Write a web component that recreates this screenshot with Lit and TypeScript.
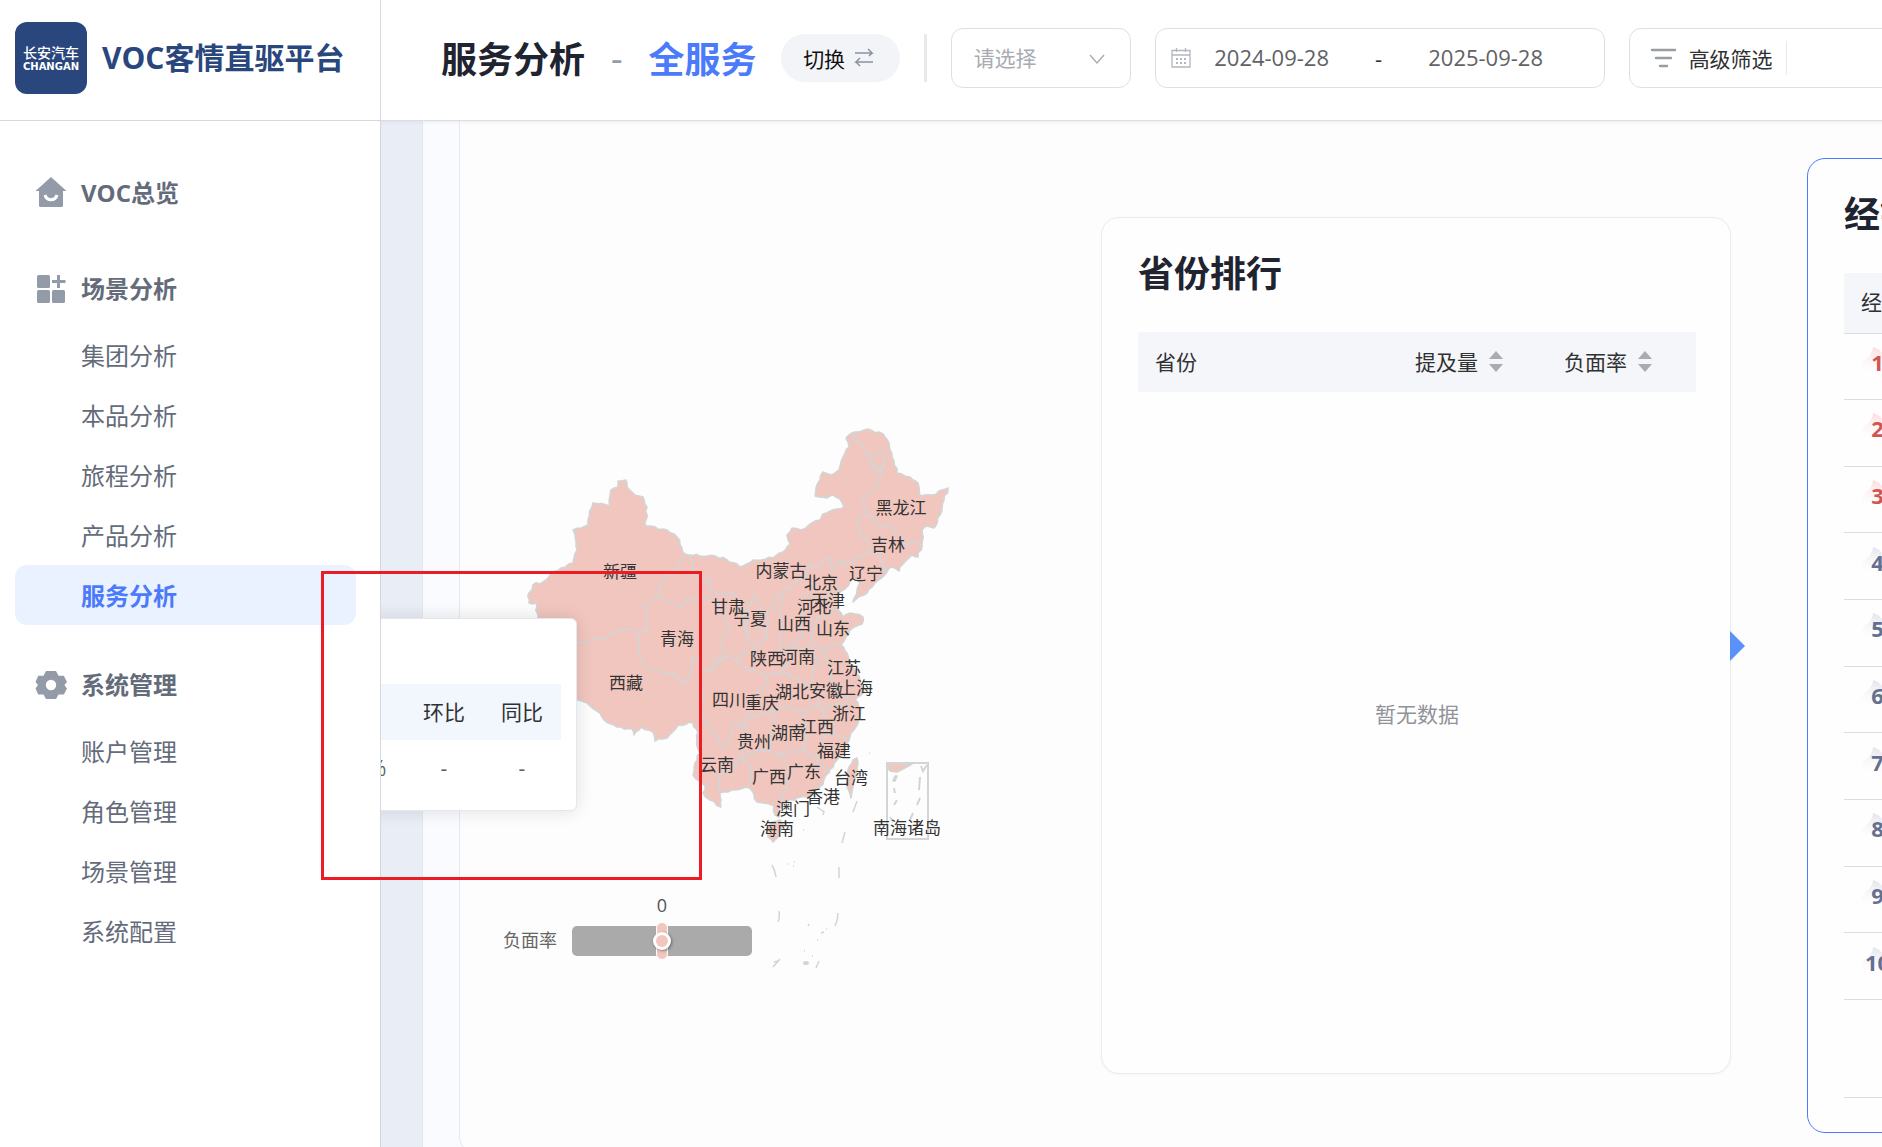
import { LitElement, html, svg, css } from "lit";
import { customElement } from "lit/decorators.js";
import { classMap } from "lit/directives/class-map.js";

type Point = [number, number];

/** Parses "x,y x,y ..." into points. */
const parse = (s: string): Point[] =>
  s.trim().split(/\s+/).map((p) => p.split(",").map(Number) as Point);

/** Breaks long segments into short irregular ones so borders read as natural coastlines. */
function rough(source: string, amplitude = 1, closed = false): string {
  const pts = parse(source);
  if (closed) pts.push(pts[0]);
  let seed = 7;
  const noise = () => {
    seed = (seed * 1103515245 + 12345) % 2147483648;
    return seed / 2147483648 - 0.5;
  };
  const out: string[] = [`M${pts[0][0]} ${pts[0][1]}`];
  for (let i = 1; i < pts.length; i++) {
    const [x0, y0] = pts[i - 1];
    const [x1, y1] = pts[i];
    const length = Math.hypot(x1 - x0, y1 - y0);
    const steps = Math.max(1, Math.round(length / 4));
    for (let k = 1; k < steps; k++) {
      const t = k / steps;
      const shift = noise() * 2 * amplitude;
      const x = x0 + (x1 - x0) * t - ((y1 - y0) / length) * shift;
      const y = y0 + (y1 - y0) * t + ((x1 - x0) / length) * shift;
      out.push(`L${x.toFixed(1)} ${y.toFixed(1)}`);
    }
    out.push(`L${x1} ${y1}`);
  }
  return out.join("") + (closed ? "Z" : "");
}

const MAINLAND =
  "618,481 626,480 627,487 633,493 643,497 647,507 646,520 646,526 663,529 677,537 682,548 685,554 700,556 715,556 727,560 740,567 753,560 773,558 783,552 790,544 787,535 792,528 801,530 812,523 820,520 823,514 837,509 844,507 840,499 833,495 827,498 815,496 816,488 820,480 823,472 832,475 839,470 843,457 849,447 846,438 855,432 868,429 883,434 889,443 892,457 897,473 910,477 918,483 920,496 933,495 942,490 948,488 944,500 940,515 934,528 927,526 922,530 922,545 918,557 912,555 903,564 899,571 892,567 887,572 875,583 867,593 853,602 857,590 860,582 853,579 847,587 840,592 837,602 838,610 843,617 850,613 863,617 862,624 850,630 841,645 847,653 853,667 860,680 864,692 855,700 861,708 858,723 850,737 845,750 837,760 828,773 820,787 808,797 797,798 783,803 778,810 779,817 775,815 774,806 757,802 753,792 747,787 732,790 720,793 721,807 710,800 703,793 705,785 693,775 695,763 700,753 697,740 698,732 693,723 678,725 667,738 655,741 653,732 641,727 634,735 632,729 617,727 608,723 600,713 587,703 578,700 565,692 556,675 548,650 538,617 536,603 529,603 529,593 533,585 543,582 550,575 573,563 577,550 573,530 588,525 588,520 593,503 610,506 611,490 618,487";

const BORDERS = [
  "560,644 577,642 590,640 603,638 617,632 630,629 638,632 647,632 648,622 643,605 658,597 660,585 667,577 678,568 683,555",
  "657,597 670,602 682,607 688,597 698,600 707,597 720,607 728,627 723,643 723,657 710,672 700,668",
  "690,554 694,570 703,583 710,578 709,588 718,595 733,593 736,604 744,612 747,637",
  "638,633 639,653 645,665 660,672 677,675 683,685 690,677 692,658 698,657 700,670 702,700 703,717 710,727 722,748 728,743 733,723 747,727 743,717",
  "710,672 716,658 723,660 728,655 737,660 743,667 757,672 768,675 780,673 797,678 812,687 813,670 820,663 808,647 790,650",
  "755,595 748,607 747,637 755,647 767,638 758,628 761,612 755,595",
  "767,638 767,613 778,595 793,585 806,577 808,563 818,567 828,557 833,570 840,560 843,567 857,557 870,552 867,537 862,537 857,520 867,515 862,500 875,488 882,473 873,463 865,453 862,443 853,440 857,433",
  "870,455 883,452 886,462 880,473 872,468 870,455",
  "867,515 873,517 875,523 893,527 900,538 908,545 914,542 922,547",
  "870,552 880,553 882,563 887,572",
  "785,593 780,607 782,627 779,650 790,658 780,673",
  "805,593 803,610 802,637 783,650",
  "810,643 817,617 830,613 838,610",
  "806,577 814,588 811,597 822,600 830,592 842,590",
  "823,650 830,667 833,683 840,697 852,700",
  "810,643 823,650 832,644 841,645",
  "768,675 763,690 752,700 747,717 760,715 773,710 783,708 803,710 820,705 812,687",
  "740,722 744,738 742,757 760,750 770,750 773,733 772,710",
  "720,793 718,775 730,770 742,757 752,770 748,787",
  "760,750 780,753 790,767 787,787 778,803",
  "780,753 803,750 805,733 803,710",
  "803,750 817,760 823,767 830,773",
  "820,705 823,710 827,733 820,750 817,760",
  "827,733 838,736 849,737",
  "823,710 838,703 852,704",
  "737,660 745,650 752,655 755,647",
];

const HAINAN = "780,820 783,825 778,837 773,842 768,837 767,828 772,822";
const TAIWAN = "857,758 858,763 856,776 853,787 851,798 847,787 848,770 853,760";

const ISLETS =
  "M857 801L853 812M845 832L842 843M839 867V878M838 913Q838 920 835 926M819 961L816 968M779 911Q780 918 778 922M772 865Q775 870 776 877M780 959L773 967M774 962L778 961M817 807L824 812L823 815M803 830h1M788 864h1M793 866h1M794 862h1M808 926l1 -2M821 933l3 -1M826 929h1M817 940h1M804 951h1M812 956h1M869 753h1";

const INSET =
  "M921 766L923 771L927 765M894 788L895 793M897 800L894 805M920 777L919 790M920 798L917 805M913 813L910 820M890 817L893 822";

const LABELS: [string, number, number][] = [
  ["新疆", 620, 572], ["西藏", 626, 683], ["青海", 677, 639], ["甘肃", 728, 607],
  ["宁夏", 750, 619], ["黑龙江", 901, 508], ["吉林", 888, 545], ["辽宁", 866, 574],
  ["内蒙古", 781, 571], ["北京", 821, 583], ["天津", 828, 601], ["河北", 814, 607],
  ["山西", 794, 624], ["山东", 833, 629], ["陕西", 767, 659], ["河南", 798, 657],
  ["江苏", 844, 668], ["上海", 856, 688], ["安徽", 826, 691], ["湖北", 792, 692],
  ["重庆", 762, 703], ["四川", 729, 700], ["浙江", 849, 714], ["江西", 817, 727],
  ["湖南", 788, 733], ["贵州", 754, 742], ["福建", 834, 751], ["云南", 717, 765],
  ["广西", 769, 777], ["广东", 804, 772], ["台湾", 851, 778], ["香港", 823, 797],
  ["澳门", 793, 809], ["海南", 777, 829], ["南海诸岛", 907, 828],
];

const FONT = css`
  * { box-sizing: border-box; }
  button, input, select { font: inherit; color: inherit; }
  h1, h2, p { margin: 0; }
`;

@customElement("side-nav")
class SideNav extends LitElement {
  static styles = [FONT, css`
    :host { display: block; background: #fff; border-right: 1px solid #d6d7da; padding: 36px 24px 0 15px; }
    .group { margin: 0 0 24px; }
    .head { display: flex; align-items: center; height: 72px; padding-left: 18px; gap: 12px; font-weight: 700; color: #646b7a; text-decoration: none; }
    .text { padding-bottom: 3px; }
    .icon { width: 36px; height: 36px; flex: none; fill: #949ba8; }
    .list { list-style: none; margin: 0; padding: 0; }
    .link { display: flex; align-items: center; height: 60px; padding: 0 0 2px 66px; border-radius: 12px; color: #646b7a; text-decoration: none; }
    .active { background: #ebf2ff; color: #4b7bfa; font-weight: 700; }
  `];

  private icon(name: string) {
    const shapes: Record<string, unknown> = {
      home: svg`<path d="M18 2L2.500 16H6v14.500a1.500 1.500 0 0 0 1.500 1.500h21a1.500 1.500 0 0 0 1.500-1.500V16h3.500z"/><path d="M12 20a6.200 6.200 0 0 0 12 0" fill="none" stroke="#fff" stroke-width="3"/>`,
      grid: svg`<rect x="4" y="4" width="13" height="13" rx="1.500"/><rect x="4" y="19" width="13" height="13" rx="1.500"/><rect x="19" y="19" width="13" height="13" rx="1.500"/><path d="M24 4h3v5h5.500v3H27v5h-3v-5h-5V9h5z"/>`,
      gear: svg`<path fill-rule="evenodd" d="M13 4h10l2.500 4.700h5.300L34 15l-2.600 3L34 21.500l-3.200 6h-5.300L23 32H13l-2.500-4.500H5.200L2.500 21.500 5 18 2.500 15l2.700-6.300h5.300zM18 12.800a5.200 5.200 0 1 0 0 10.400 5.200 5.200 0 0 0 0-10.400z"/>`,
    };
    return html`<svg class="icon" viewBox="0 0 36 36" aria-hidden="true">${shapes[name]}</svg>`;
  }

  private groups = [
    { icon: "home", title: "VOC总览", items: [] as string[] },
    { icon: "grid", title: "场景分析", items: ["集团分析", "本品分析", "旅程分析", "产品分析", "服务分析"] },
    { icon: "gear", title: "系统管理", items: ["账户管理", "角色管理", "场景管理", "系统配置"] },
  ];

  render() {
    return html`<nav>
      ${this.groups.map((g) => html`<div class="group">
        <a class="head" href="#">${this.icon(g.icon)}<span class="text">${g.title}</span></a>
        ${g.items.length ? html`<ul class="list">
          ${g.items.map((t) => html`<li><a href="#" class=${classMap({ link: true, active: t === "服务分析" })}>${t}</a></li>`)}
        </ul>` : ""}
      </div>`)}
    </nav>`;
  }
}

@customElement("top-bar")
class TopBar extends LitElement {
  static styles = [FONT, css`
    :host { display: flex; align-items: center; background: #fff; border-bottom: 1px solid #dcdde2; padding: 0 0 4px 60px; overflow: hidden; font-size: 21px; white-space: nowrap; }
    .title { font-size: 36px; line-height: 48px; padding-top: 4px; font-weight: 700; color: #1f2430; flex: none; }
    .dash { font-size: 36px; line-height: 48px; color: #949ba8; margin: 0 26px; padding-top: 2px; }
    .scope { font-size: 36px; line-height: 48px; padding-top: 4px; font-weight: 700; color: #4b7bfa; flex: none; }
    .switch { display: flex; align-items: center; justify-content: center; gap: 8px; flex: none; width: 119px; height: 48px; margin-left: 24px; padding: 0 2px 0 0; border: 0; border-radius: 24px; background: #f2f4f8; color: #111; }
    .rule { flex: none; width: 3px; height: 48px; background: #e8e9ed; margin: 0 24px; }
    .box { position: relative; display: flex; align-items: center; flex: none; height: 60px; border: 1px solid #dcdfe6; border-radius: 12px; background: #fff; }
    .pick { width: 180px; }
    .select { appearance: none; width: 100%; height: 100%; border: 0; background: none; padding: 0 22px; color: #a8abb2; outline: none; }
    .chevron { position: absolute; right: 24px; top: 21px; pointer-events: none; }
    .range { width: 450px; margin-left: 24px; padding-left: 14px; font-size: 22px; color: #606266; }
    .date { width: 160px; height: 48px; border: 0; background: none; padding: 0 0 2px; text-align: center; outline: none; }
    .to { width: 54px; text-align: center; color: #303133; }
    .more { width: 400px; margin-left: 24px; padding-left: 20px; color: #303133; gap: 12px; }
    .advanced { display: flex; align-items: center; gap: 12px; height: 34px; border: 0; border-right: 1px solid #e8e9ed; background: none; padding: 0 13px 0 0; }
  `];

  render() {
    return html`
      <h1 class="title">服务分析</h1><span class="dash">-</span><span class="scope">全服务</span>
      <button class="switch" type="button">切换
        <svg width="22" height="22" viewBox="0 0 22 22" fill="none" stroke="#8a92a0" stroke-width="1.500" aria-hidden="true"><path d="M2 6h17l-4-4M19 6l-3 3M20 15H3l4-4M3 15l4 4"/></svg>
      </button>
      <span class="rule"></span>
      <div class="box pick">
        <select class="select" aria-label="请选择"><option>请选择</option></select>
        <svg class="chevron" width="18" height="18" viewBox="0 0 18 18" fill="none" stroke="#a8abb2" stroke-width="1.400" aria-hidden="true"><path d="M2 5l7 8 7-8"/></svg>
      </div>
      <div class="box range">
        <svg width="22" height="22" viewBox="0 0 22 22" fill="none" stroke="#b4b7bf" stroke-width="1.300" aria-hidden="true"><path d="M2 3.500h18v16.500H2zM2 8h18M6.500 1v4M15.500 1v4"/><path d="M6 12h2M10 12h2M14 12h2M6 16h2M10 16h2M14 16h2" stroke-width="1.800"/></svg>
        <input class="date" type="text" aria-label="开始日期" .value=${"2024-09-28"} />
        <span class="to">-</span>
        <input class="date" type="text" aria-label="结束日期" .value=${"2025-09-28"} />
      </div>
      <div class="box more">
        <button class="advanced" type="button">
          <svg width="27" height="22" viewBox="0 0 27 22" fill="none" stroke="#999ca3" stroke-width="2.400" stroke-linecap="round" aria-hidden="true"><path d="M2 3h23M6 11h15M10 19h7"/></svg>高级筛选
        </button>
      </div>`;
  }
}

@customElement("china-map")
class ChinaMap extends LitElement {
  static styles = [FONT, css`
    :host { display: block; position: relative; padding: 299px 0 0 60px; }
    .map { display: block; width: 440px; height: 560px; }
    .land { fill: #f1c6be; stroke: #d3d5d5; stroke-width: 1.600; stroke-linejoin: round; }
    .line { fill: none; stroke: #d3d5d5; stroke-width: 1.600; stroke-linejoin: round; }
    .dash { fill: none; stroke: #d3d5d5; stroke-width: 1.500; }
    .frame { fill: none; stroke: #d3d5d5; stroke-width: 2; }
    .name { font-size: 17px; fill: #333; text-anchor: middle; }
    .legend { position: absolute; left: 43px; top: 771px; display: flex; align-items: flex-end; gap: 15px; }
    .caption { font-size: 18px; line-height: 30px; padding-bottom: 1px; color: #666; }
    .slider { display: flex; flex-direction: column; align-items: center; width: 180px; font-size: 18px; line-height: 26px; color: #555; gap: 8px; }
    .track { position: relative; height: 30px; width: 100%; }
    .range { appearance: none; display: block; margin: 0; width: 100%; height: 30px; border-radius: 5px; background: #aaa; }
    .range::-webkit-slider-thumb { appearance: none; width: 12px; height: 38px; border: 1px solid #fff; border-radius: 6px; background: #f1c6be; }
    .knob { position: absolute; left: 50%; top: 50%; width: 18px; height: 18px; margin: -9px 0 0 -9px; border: 3px solid #fff; border-radius: 50%; background: #f1c6be; box-shadow: 1px 1px 3px rgba(0, 0, 0, 0.4); pointer-events: none; }
  `];

  render() {
    return html`
      <svg class="map" viewBox="520 420 440 560" role="img" aria-label="负面率">
        <path class="land" d=${rough(MAINLAND, 1.3, true)} />
        ${BORDERS.map((b) => svg`<path class="line" d=${rough(b, 1.6)} />`)}
        <path class="land" d=${rough(HAINAN, 0.6, true)} />
        <path class="land" d=${rough(TAIWAN, 0.6, true)} />
        <path class="dash" d=${ISLETS} />
        <ellipse cx="806" cy="963" rx="3" ry="2" fill="#d3d5d5" />
        <path class="land" d="M888 764H912L903 769 897 772 890 771 888 768Z" />
        <path class="land" d="M895 776L897 776 895 781 893 781Z" />
        <rect class="frame" x="887" y="763" width="41" height="76" />
        <path class="frame" d=${INSET} />
        ${LABELS.map(([t, x, y]) => svg`<text class="name" x=${x} y=${y + 6}>${t}</text>`)}
      </svg>
      <div class="legend">
        <label class="caption" for="rate">负面率</label>
        <div class="slider">
          <span>0</span>
          <div class="track"><input class="range" id="rate" type="range" /><span class="knob"></span></div>
        </div>
      </div>`;
  }
}

@customElement("province-rank")
class ProvinceRank extends LitElement {
  static styles = [FONT, css`
    :host { display: flex; flex-direction: column; position: relative; background: #fefefe; border: 1px solid #ebebef; border-radius: 18px; padding: 32px 34px 34px 36px; box-shadow: 0 1px 3px rgba(0, 0, 0, 0.03); }
    .title { font-size: 36px; line-height: 48px; margin-bottom: 34px; color: #1f2430; }
    .table { width: 100%; border-collapse: collapse; table-layout: fixed; font-size: 21px; color: #303133; background: #f5f6fa; }
    .cell { height: 60px; padding: 0 15px 3px 17px; text-align: left; font-weight: 400; }
    .num { width: 149px; padding: 0 0 3px 17px; }
    .sort { display: flex; align-items: center; gap: 11px; border: 0; background: none; padding: 0; }
    .empty { flex: 1; display: flex; align-items: center; justify-content: center; padding-bottom: 6px; font-size: 21px; color: #909399; }
    .arrow { position: absolute; left: 100%; top: 413px; width: 0; height: 0; border: 15px solid transparent; border-left-color: #5a91fa; border-right-width: 0; }
  `];

  private sort(text: string) {
    return html`<th class="cell num"><button class="sort" type="button">${text}
      <svg width="14" height="24" viewBox="0 0 14 24" fill="#a8abb2" aria-hidden="true"><path d="M7 2l7 8H0zM7 23l7-8H0z"/></svg></button></th>`;
  }

  render() {
    return html`
      <h2 class="title">省份排行</h2>
      <table class="table"><thead><tr><th class="cell">省份</th>${this.sort("提及量")}${this.sort("负面率")}</tr></thead></table>
      <p class="empty">暂无数据</p>
      <span class="arrow"></span>`;
  }
}

@customElement("dealer-rank")
class DealerRank extends LitElement {
  static styles = [FONT, css`
    :host { display: block; background: #fefefe; border: 1px solid #4b7bfa; border-radius: 18px; padding: 32px 36px 34px; }
    .title { font-size: 36px; line-height: 48px; margin-bottom: 34px; color: #1f2430; white-space: nowrap; }
    .table { width: 100%; height: 727px; border-collapse: collapse; font-size: 21px; }
    .th { height: 60px; padding: 0 17px 3px; text-align: left; font-weight: 400; color: #303133; background: #f5f6fa; border-bottom: 1px solid #dcdde3; }
    .td { padding: 0 17px 9px; border-bottom: 1px solid #dcdde3; }
    .badge { position: relative; display: flex; align-items: center; justify-content: center; width: 33px; height: 30px; font-weight: 700; font-size: 22px; color: #64708f; }
    .hot { color: #cf5655; }
    .flame { position: absolute; left: 0; top: 0; }
    .value { position: relative; }
    .rest { height: 98px; border-bottom: 1px solid #dcdde3; }
  `];

  render() {
    return html`
      <h2 class="title">经销商</h2>
      <table class="table">
        <thead><tr><th class="th">经销商</th></tr></thead>
        <tbody>${Array.from({ length: 10 }, (_, i) => i + 1).map((n) => html`<tr><td class="td">
          <span class=${classMap({ badge: true, hot: n <= 3 })}>
            <svg class="flame" width="33" height="30" viewBox="0 0 33 30" aria-hidden="true">
              <defs><linearGradient id=${`flame-${n}`} x1="0.500" y1="0" x2="0.300" y2="1">
                <stop offset="0" stop-color=${n <= 3 ? "#fbdcdc" : "#e2e4ec"} /><stop offset="1" stop-color="#fff" stop-opacity="0" />
              </linearGradient></defs>
              <path fill=${`url(#flame-${n})`} d="M12 0C22 3 22 9 26 13C31 17 33 20 32 22C31 27 25 30 20 29C23 25 19 21 16 17C14 21 8 23 9 29C3 27 0 24 0 20C0 12 11 12 12 0Z" />
            </svg><span class="value">${n}</span>
          </span></td></tr>`)}</tbody>
      </table>
      <div class="rest"></div>`;
  }
}

@customElement("app-root")
class AppRoot extends LitElement {
  static styles = [FONT, css`
    :host { display: grid; grid-template: 121px minmax(0, 1fr) / 381px minmax(0, 1fr); height: 100vh; overflow: hidden; position: relative; font-family: "Open Sans", "Noto Sans CJK SC", sans-serif; font-size: 24px; background: #fff; }
    .brand { display: flex; align-items: center; gap: 15px; padding: 0 0 4px 15px; border-right: 1px solid #d6d7da; border-bottom: 1px solid #d6d7da; white-space: nowrap; }
    .logo { flex: none; width: 72px; height: 72px; border-radius: 12px; background: #29477d; display: flex; flex-direction: column; align-items: center; justify-content: center; color: #fff; padding-top: 2px; }
    .cn { font-size: 14px; line-height: 16px; font-weight: 500; }
    .en { font: 700 10px/12px "DejaVu Sans", sans-serif; }
    .name { font-size: 30px; font-weight: 700; color: #29477d; padding-bottom: 4px; }
    .main { position: relative; overflow: hidden; background: #e9edf6; padding-left: 41px; }
    .page { background: #fafbfe; border-left: 1px solid #e2e8f2; padding-left: 36px; min-height: 100%; }
    .card { display: grid; grid-template-columns: minmax(0, 641fr) minmax(0, 630fr) 151px; background: #fdfdfd; border: 1px solid #e8e9ee; border-width: 0 0 1px 1px; border-radius: 0 0 0 18px; padding-bottom: 20px; }
    .province { margin: 96px 0 59px; }
    .dealer { width: 320px; margin: 37px 0 0 76px; }
    .shade { position: absolute; inset: 0 0 auto; height: 4px; background: linear-gradient(rgba(40, 50, 80, 0.05), transparent); }
    .tip { position: absolute; left: -40px; top: 497px; width: 236px; padding: 65px 15px 14px; background: #fff; border: 1px solid #e4e7ed; border-radius: 6px; box-shadow: 0 0 18px rgba(0, 0, 0, 0.12); }
    .grid { width: 100%; border-collapse: collapse; table-layout: fixed; font-size: 21px; color: #303133; text-align: center; }
    .col { width: 78px; }
    .th { height: 56px; padding: 0 0 2px; font-weight: 400; background: #f2f7fe; }
    .td { height: 56px; padding: 0; color: #606266; }
    .first { text-align: left; }
    .mark { position: absolute; left: 321px; top: 571px; width: 381px; height: 309px; border: 3px solid #ed1c24; pointer-events: none; }
  `];

  render() {
    return html`
      <div class="brand">
        <span class="logo"><span class="cn">长安汽车</span><span class="en">CHANGAN</span></span>
        <span class="name">VOC客情直驱平台</span>
      </div>
      <top-bar></top-bar>
      <side-nav></side-nav>
      <main class="main">
        <div class="page">
          <div class="card">
            <china-map></china-map>
            <province-rank class="province"></province-rank>
            <dealer-rank class="dealer"></dealer-rank>
          </div>
        </div>
        <div class="shade"></div>
        <div class="tip">
          <table class="grid">
            <thead><tr><th class="th"></th><th class="th col">环比</th><th class="th col">同比</th></tr></thead>
            <tbody><tr><td class="td first">0%</td><td class="td">-</td><td class="td">-</td></tr></tbody>
          </table>
        </div>
      </main>
      <div class="mark"></div>`;
  }
}
